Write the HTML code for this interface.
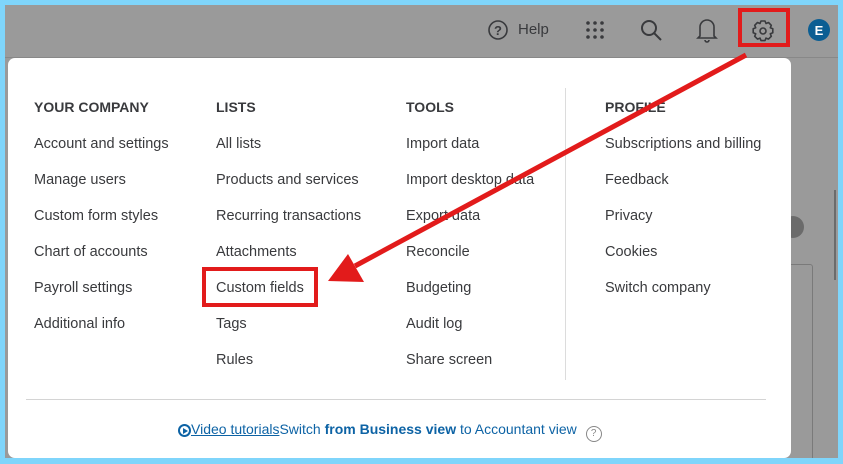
<!DOCTYPE html><html><head><style>
body{margin:0;width:843px;height:464px;overflow:hidden;font-family:"Liberation Sans",sans-serif;}
.frame{position:absolute;left:0;top:0;width:843px;height:464px;background:#7fd5fb}
.bg{position:absolute;left:5px;top:5px;width:833px;height:453px;background:#9a9a9a;overflow:hidden}
.panel{position:absolute;left:8px;top:58px;width:783px;height:400px;background:#fff;border-radius:7px}
.col{position:absolute;top:1px;font-size:14.5px;color:#393a3d}
.col div{position:absolute;white-space:nowrap;left:0}
.h{font-weight:bold;font-size:14px}
</style></head><body>
<div class="frame"></div>
<div class="bg">
<div style="position:absolute;left:0;top:52px;width:833px;height:1px;background:#888"></div>
<div style="position:absolute;left:777px;top:211px;width:22px;height:22px;border-radius:50%;background:#6b6b6b"></div>
<div style="position:absolute;left:760px;top:259px;width:46px;height:220px;border:1px solid #7a7a7a;border-radius:3px"></div>
<div style="position:absolute;left:829px;top:185px;width:2px;height:90px;background:#6b6b6b"></div>
</div>
<svg style="position:absolute;left:0;top:0" width="843" height="60">
<circle cx="498" cy="30" r="9" fill="none" stroke="#393a3d" stroke-width="1.6"/>
<text x="498" y="35" font-size="13" font-weight="bold" text-anchor="middle" fill="#393a3d" font-family="Liberation Sans">?</text>
<text x="518" y="34" font-size="15" fill="#393a3d" font-family="Liberation Sans">Help</text>
<g fill="#393a3d"><circle cx="588" cy="23" r="1.8"/><circle cx="595" cy="23" r="1.8"/><circle cx="602" cy="23" r="1.8"/><circle cx="588" cy="30" r="1.8"/><circle cx="595" cy="30" r="1.8"/><circle cx="602" cy="30" r="1.8"/><circle cx="588" cy="37" r="1.8"/><circle cx="595" cy="37" r="1.8"/><circle cx="602" cy="37" r="1.8"/></g>
<circle cx="649" cy="28" r="7" fill="none" stroke="#393a3d" stroke-width="2"/><line x1="654" y1="33" x2="661" y2="40" stroke="#393a3d" stroke-width="2"/>
<path d="M700 36 V27 a7 7 0 0 1 14 0 V36 l2 2 H698 Z M705 40 a2 2 0 0 0 4 0" fill="none" stroke="#393a3d" stroke-width="1.6"/>
<path d="M761 21 h4 l1 2.5 l2.5 -1 l2.8 2.8 l-1 2.5 l2.5 1 v4 l-2.5 1 l1 2.5 l-2.8 2.8 l-2.5 -1 l-1 2.5 h-4 l-1 -2.5 l-2.5 1 l-2.8 -2.8 l1 -2.5 l-2.5 -1 v-4 l2.5 -1 l-1 -2.5 l2.8 -2.8 l2.5 1 Z" fill="none" stroke="#393a3d" stroke-width="1.6" stroke-linejoin="round"/>
<circle cx="763" cy="31" r="3" fill="none" stroke="#393a3d" stroke-width="1.6"/>
<rect x="740" y="10" width="48" height="35" fill="none" stroke="#e21b1b" stroke-width="4"/>
<circle cx="819" cy="30" r="11" fill="#0b5e93"/>
<text x="819" y="35" font-size="13" font-weight="bold" text-anchor="middle" fill="#fff" font-family="Liberation Sans">E</text>
</svg>
<div class="panel">
<div style="position:absolute;left:557px;top:30px;width:1px;height:292px;background:#dcdcdc"></div>
<div style="position:absolute;left:18px;top:341px;width:740px;height:1px;background:#d4d4d4"></div>
<div class="col" style="left:26px"><div class="h" style="top:40px">YOUR COMPANY</div><div style="top:77px">Account and settings</div><div style="top:113px">Manage users</div><div style="top:149px">Custom form styles</div><div style="top:185px">Chart of accounts</div><div style="top:221px">Payroll settings</div><div style="top:257px">Additional info</div></div>
<div class="col" style="left:208px"><div class="h" style="top:40px">LISTS</div><div style="top:77px">All lists</div><div style="top:113px">Products and services</div><div style="top:149px">Recurring transactions</div><div style="top:185px">Attachments</div><div style="top:221px">Custom fields</div><div style="top:257px">Tags</div><div style="top:293px">Rules</div></div>
<div class="col" style="left:398px"><div class="h" style="top:40px">TOOLS</div><div style="top:77px">Import data</div><div style="top:113px">Import desktop data</div><div style="top:149px">Export data</div><div style="top:185px">Reconcile</div><div style="top:221px">Budgeting</div><div style="top:257px">Audit log</div><div style="top:293px">Share screen</div></div>
<div class="col" style="left:597px"><div class="h" style="top:40px">PROFILE</div><div style="top:77px">Subscriptions and billing</div><div style="top:113px">Feedback</div><div style="top:149px">Privacy</div><div style="top:185px">Cookies</div><div style="top:221px">Switch company</div></div>
<div style="position:absolute;left:170px;top:363px;font-size:14px;color:#0d63a5;white-space:nowrap">
<span style="display:inline-block;width:13px;height:13px;border:2px solid #0d63a5;border-radius:50%;vertical-align:-3px;box-sizing:border-box;position:relative"><span style="position:absolute;left:3px;top:2px;border-left:5px solid #0d63a5;border-top:3px solid transparent;border-bottom:3px solid transparent"></span></span><span style="text-decoration:underline">Video tutorials</span>Switch <b>from Business view</b> to Accountant view <span style="display:inline-block;width:14px;height:14px;border:1.5px solid #888;border-radius:50%;color:#888;font-size:10px;text-align:center;line-height:14px;margin-left:5px;vertical-align:-2px">?</span></div>
</div>
<svg style="position:absolute;left:0;top:0" width="843" height="464">
<rect x="204" y="269" width="112" height="36" fill="none" stroke="#e21b1b" stroke-width="4"/>
<line x1="746" y1="55" x2="355" y2="266" stroke="#e21b1b" stroke-width="5"/>
<polygon points="328,281 348,254 364,282" fill="#e21b1b"/>
</svg>
</body></html>
